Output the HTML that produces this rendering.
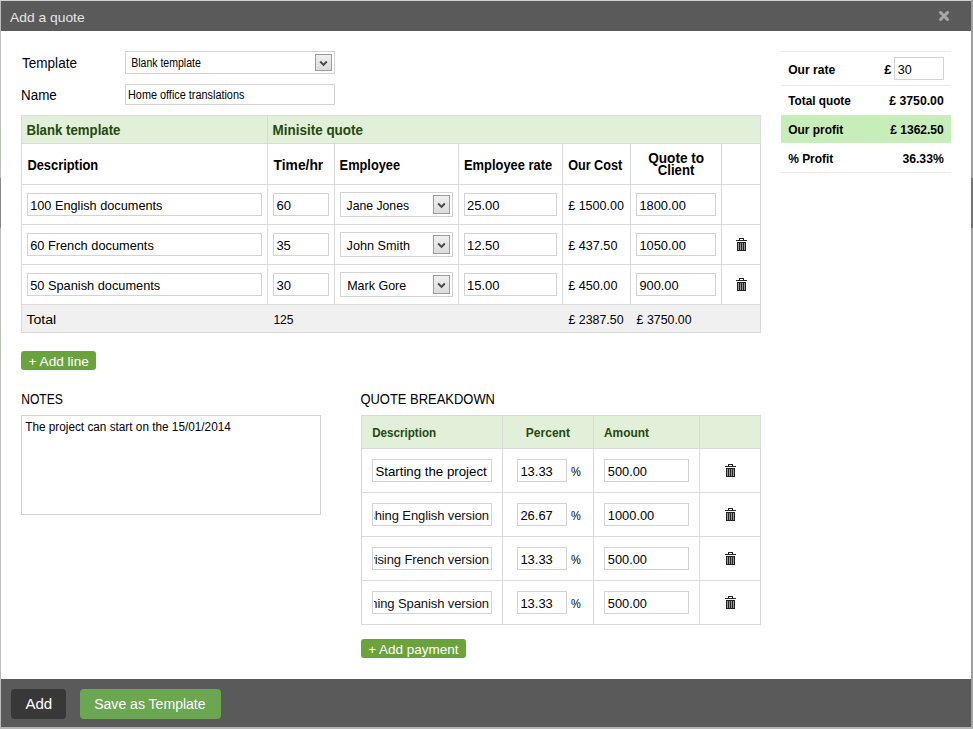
<!DOCTYPE html>
<html><head><meta charset="utf-8">
<style>
*{box-sizing:border-box;margin:0;padding:0}
html,body{width:973px;height:729px;overflow:hidden;background:#bdbdbd;font-family:"Liberation Sans",sans-serif}
.a{position:absolute}
.box{position:absolute;border:1px solid #d3d3d3;background:#fff}
.selbtn{position:absolute;border:1px solid #9c9c9c;background:linear-gradient(#f0f0f0,#dcdcdc)}
svg text{font-family:"Liberation Sans",sans-serif}
</style></head><body>

<div class="a" style="left:0px;top:0px;width:973px;height:1px;background:#d2d2d2;"></div>
<div class="a" style="left:1px;top:1px;width:970px;height:726px;background:#ffffff;"></div>
<div class="a" style="left:971px;top:0px;width:2px;height:729px;background:#a0a0a0;"></div>
<div class="a" style="left:971px;top:178px;width:2px;height:50px;background:#747474;"></div>
<div class="a" style="left:0px;top:1px;width:1px;height:726px;background:#bcbcbc;"></div>
<div class="a" style="left:0px;top:178px;width:1px;height:50px;background:#8a8a8a;"></div>
<div class="a" style="left:0px;top:125px;width:1px;height:41px;background:#b5c2ad;"></div>
<div class="a" style="left:0px;top:328px;width:1px;height:31px;background:#b5c2ad;"></div>
<div class="a" style="left:0px;top:727px;width:973px;height:2px;background:#b4b4b4;"></div>
<div class="a" style="left:1px;top:1px;width:970px;height:30px;background:#5a5a5a;"></div>
<svg class="a" style="left:939px;top:11px" width="10" height="10" viewBox="0 0 10 10"><path d="M1.6 1.6L8.4 8.4M8.4 1.6L1.6 8.4" stroke="#a6a6a6" stroke-width="3" stroke-linecap="square"/></svg>
<div class="a" style="left:1px;top:679px;width:970px;height:48px;background:#5a5a5a;"></div>
<div class="a" style="left:11px;top:689px;width:55px;height:30px;background:#383838;border-radius:4px"></div>
<div class="a" style="left:80px;top:689px;width:141px;height:30px;background:#6ba651;border-radius:4px"></div>
<div class="box" style="left:125px;top:51px;width:210px;height:23px;border-color:#d3d3d3"></div>
<div class="selbtn" style="left:315px;top:54px;width:17px;height:17px"><svg class="a" style="left:3.0px;top:5.0px" width="9" height="7" viewBox="0 0 9 7"><path d="M1.2 1.5L4.5 4.9L7.8 1.5" fill="none" stroke="#4a4a4a" stroke-width="2"/></svg></div>
<div class="box" style="left:125px;top:84px;width:210px;height:21px;border-color:#d3d3d3"></div>
<div class="a" style="left:22px;top:116px;width:738px;height:27px;background:#e2efd9;"></div>
<div class="a" style="left:22px;top:305px;width:738px;height:27px;background:#f0f0f0;"></div>
<div class="a" style="left:21px;top:115px;width:740px;height:1px;background:#dadada"></div>
<div class="a" style="left:21px;top:143px;width:740px;height:1px;background:#dadada"></div>
<div class="a" style="left:21px;top:184px;width:740px;height:1px;background:#dadada"></div>
<div class="a" style="left:21px;top:224px;width:740px;height:1px;background:#dadada"></div>
<div class="a" style="left:21px;top:264px;width:740px;height:1px;background:#dadada"></div>
<div class="a" style="left:21px;top:304px;width:740px;height:1px;background:#dadada"></div>
<div class="a" style="left:21px;top:332px;width:740px;height:1px;background:#dadada"></div>
<div class="a" style="left:21px;top:115px;width:1px;height:218px;background:#dadada"></div>
<div class="a" style="left:760px;top:115px;width:1px;height:218px;background:#dadada"></div>
<div class="a" style="left:267px;top:115px;width:1px;height:190px;background:#dadada"></div>
<div class="a" style="left:334px;top:143px;width:1px;height:162px;background:#dadada"></div>
<div class="a" style="left:458px;top:143px;width:1px;height:162px;background:#dadada"></div>
<div class="a" style="left:562px;top:143px;width:1px;height:162px;background:#dadada"></div>
<div class="a" style="left:630px;top:143px;width:1px;height:162px;background:#dadada"></div>
<div class="a" style="left:721px;top:143px;width:1px;height:162px;background:#dadada"></div>
<div class="box" style="left:27px;top:193px;width:235px;height:23px;border-color:#d3d3d3"></div>
<div class="box" style="left:273px;top:193px;width:56px;height:23px;border-color:#d3d3d3"></div>
<div class="box" style="left:340px;top:192px;width:113px;height:25px;border-color:#d3d3d3"></div>
<div class="selbtn" style="left:433px;top:195px;width:17px;height:19px"><svg class="a" style="left:3.0px;top:6.0px" width="9" height="7" viewBox="0 0 9 7"><path d="M1.2 1.5L4.5 4.9L7.8 1.5" fill="none" stroke="#4a4a4a" stroke-width="2"/></svg></div>
<div class="box" style="left:464px;top:193px;width:93px;height:23px;border-color:#d3d3d3"></div>
<div class="box" style="left:636px;top:193px;width:80px;height:23px;border-color:#d3d3d3"></div>
<div class="box" style="left:27px;top:233px;width:235px;height:23px;border-color:#d3d3d3"></div>
<div class="box" style="left:273px;top:233px;width:56px;height:23px;border-color:#d3d3d3"></div>
<div class="box" style="left:340px;top:232px;width:113px;height:25px;border-color:#d3d3d3"></div>
<div class="selbtn" style="left:433px;top:235px;width:17px;height:19px"><svg class="a" style="left:3.0px;top:6.0px" width="9" height="7" viewBox="0 0 9 7"><path d="M1.2 1.5L4.5 4.9L7.8 1.5" fill="none" stroke="#4a4a4a" stroke-width="2"/></svg></div>
<div class="box" style="left:464px;top:233px;width:93px;height:23px;border-color:#d3d3d3"></div>
<div class="box" style="left:636px;top:233px;width:80px;height:23px;border-color:#d3d3d3"></div>
<svg class="a" style="left:736px;top:238px" width="11" height="13" viewBox="0 0 11 13" shape-rendering="crispEdges">
<rect x="3" y="0" width="5" height="1" fill="#222"/><rect x="3" y="1" width="1" height="1" fill="#222"/><rect x="7" y="1" width="1" height="1" fill="#222"/>
<rect x="0" y="2" width="11" height="1" fill="#222"/>
<rect x="1" y="4" width="9" height="9" fill="#222"/>
<rect x="2" y="5" width="1" height="7" fill="#999"/><rect x="4" y="5" width="1" height="7" fill="#999"/><rect x="6" y="5" width="1" height="7" fill="#999"/><rect x="8" y="5" width="1" height="7" fill="#999"/>
</svg>
<div class="box" style="left:27px;top:273px;width:235px;height:23px;border-color:#d3d3d3"></div>
<div class="box" style="left:273px;top:273px;width:56px;height:23px;border-color:#d3d3d3"></div>
<div class="box" style="left:340px;top:272px;width:113px;height:25px;border-color:#d3d3d3"></div>
<div class="selbtn" style="left:433px;top:275px;width:17px;height:19px"><svg class="a" style="left:3.0px;top:6.0px" width="9" height="7" viewBox="0 0 9 7"><path d="M1.2 1.5L4.5 4.9L7.8 1.5" fill="none" stroke="#4a4a4a" stroke-width="2"/></svg></div>
<div class="box" style="left:464px;top:273px;width:93px;height:23px;border-color:#d3d3d3"></div>
<div class="box" style="left:636px;top:273px;width:80px;height:23px;border-color:#d3d3d3"></div>
<svg class="a" style="left:736px;top:278px" width="11" height="13" viewBox="0 0 11 13" shape-rendering="crispEdges">
<rect x="3" y="0" width="5" height="1" fill="#222"/><rect x="3" y="1" width="1" height="1" fill="#222"/><rect x="7" y="1" width="1" height="1" fill="#222"/>
<rect x="0" y="2" width="11" height="1" fill="#222"/>
<rect x="1" y="4" width="9" height="9" fill="#222"/>
<rect x="2" y="5" width="1" height="7" fill="#999"/><rect x="4" y="5" width="1" height="7" fill="#999"/><rect x="6" y="5" width="1" height="7" fill="#999"/><rect x="8" y="5" width="1" height="7" fill="#999"/>
</svg>
<div class="a" style="left:21px;top:351px;width:75px;height:19px;background:#6aa33b;border-radius:3px"></div>
<div class="box" style="left:21px;top:415px;width:300px;height:100px;border-color:#d3d3d3"></div>
<div class="a" style="left:362px;top:416px;width:398px;height:32px;background:#e2efd9;"></div>
<div class="a" style="left:361px;top:415px;width:400px;height:1px;background:#dadada"></div>
<div class="a" style="left:361px;top:448px;width:400px;height:1px;background:#dadada"></div>
<div class="a" style="left:361px;top:492px;width:400px;height:1px;background:#dadada"></div>
<div class="a" style="left:361px;top:536px;width:400px;height:1px;background:#dadada"></div>
<div class="a" style="left:361px;top:580px;width:400px;height:1px;background:#dadada"></div>
<div class="a" style="left:361px;top:624px;width:400px;height:1px;background:#dadada"></div>
<div class="a" style="left:361px;top:415px;width:1px;height:210px;background:#dadada"></div>
<div class="a" style="left:502px;top:415px;width:1px;height:210px;background:#dadada"></div>
<div class="a" style="left:593px;top:415px;width:1px;height:210px;background:#dadada"></div>
<div class="a" style="left:699px;top:415px;width:1px;height:210px;background:#dadada"></div>
<div class="a" style="left:760px;top:415px;width:1px;height:210px;background:#dadada"></div>
<div class="box" style="left:372px;top:459px;width:120px;height:23px;border-color:#d3d3d3"></div>
<div class="box" style="left:517px;top:459px;width:50px;height:23px;border-color:#d3d3d3"></div>
<div class="box" style="left:604px;top:459px;width:85px;height:23px;border-color:#d3d3d3"></div>
<svg class="a" style="left:725px;top:464px" width="11" height="13" viewBox="0 0 11 13" shape-rendering="crispEdges">
<rect x="3" y="0" width="5" height="1" fill="#222"/><rect x="3" y="1" width="1" height="1" fill="#222"/><rect x="7" y="1" width="1" height="1" fill="#222"/>
<rect x="0" y="2" width="11" height="1" fill="#222"/>
<rect x="1" y="4" width="9" height="9" fill="#222"/>
<rect x="2" y="5" width="1" height="7" fill="#999"/><rect x="4" y="5" width="1" height="7" fill="#999"/><rect x="6" y="5" width="1" height="7" fill="#999"/><rect x="8" y="5" width="1" height="7" fill="#999"/>
</svg>
<div class="box" style="left:372px;top:503px;width:120px;height:23px;border-color:#d3d3d3"></div>
<div class="box" style="left:517px;top:503px;width:50px;height:23px;border-color:#d3d3d3"></div>
<div class="box" style="left:604px;top:503px;width:85px;height:23px;border-color:#d3d3d3"></div>
<svg class="a" style="left:725px;top:508px" width="11" height="13" viewBox="0 0 11 13" shape-rendering="crispEdges">
<rect x="3" y="0" width="5" height="1" fill="#222"/><rect x="3" y="1" width="1" height="1" fill="#222"/><rect x="7" y="1" width="1" height="1" fill="#222"/>
<rect x="0" y="2" width="11" height="1" fill="#222"/>
<rect x="1" y="4" width="9" height="9" fill="#222"/>
<rect x="2" y="5" width="1" height="7" fill="#999"/><rect x="4" y="5" width="1" height="7" fill="#999"/><rect x="6" y="5" width="1" height="7" fill="#999"/><rect x="8" y="5" width="1" height="7" fill="#999"/>
</svg>
<div class="box" style="left:372px;top:547px;width:120px;height:23px;border-color:#d3d3d3"></div>
<div class="box" style="left:517px;top:547px;width:50px;height:23px;border-color:#d3d3d3"></div>
<div class="box" style="left:604px;top:547px;width:85px;height:23px;border-color:#d3d3d3"></div>
<svg class="a" style="left:725px;top:552px" width="11" height="13" viewBox="0 0 11 13" shape-rendering="crispEdges">
<rect x="3" y="0" width="5" height="1" fill="#222"/><rect x="3" y="1" width="1" height="1" fill="#222"/><rect x="7" y="1" width="1" height="1" fill="#222"/>
<rect x="0" y="2" width="11" height="1" fill="#222"/>
<rect x="1" y="4" width="9" height="9" fill="#222"/>
<rect x="2" y="5" width="1" height="7" fill="#999"/><rect x="4" y="5" width="1" height="7" fill="#999"/><rect x="6" y="5" width="1" height="7" fill="#999"/><rect x="8" y="5" width="1" height="7" fill="#999"/>
</svg>
<div class="box" style="left:372px;top:591px;width:120px;height:23px;border-color:#d3d3d3"></div>
<div class="box" style="left:517px;top:591px;width:50px;height:23px;border-color:#d3d3d3"></div>
<div class="box" style="left:604px;top:591px;width:85px;height:23px;border-color:#d3d3d3"></div>
<svg class="a" style="left:725px;top:596px" width="11" height="13" viewBox="0 0 11 13" shape-rendering="crispEdges">
<rect x="3" y="0" width="5" height="1" fill="#222"/><rect x="3" y="1" width="1" height="1" fill="#222"/><rect x="7" y="1" width="1" height="1" fill="#222"/>
<rect x="0" y="2" width="11" height="1" fill="#222"/>
<rect x="1" y="4" width="9" height="9" fill="#222"/>
<rect x="2" y="5" width="1" height="7" fill="#999"/><rect x="4" y="5" width="1" height="7" fill="#999"/><rect x="6" y="5" width="1" height="7" fill="#999"/><rect x="8" y="5" width="1" height="7" fill="#999"/>
</svg>
<div class="a" style="left:361px;top:639px;width:105px;height:19px;background:#6aa33b;border-radius:3px"></div>
<div class="a" style="left:781px;top:51px;width:170px;height:1px;background:#e8e8e8"></div>
<div class="a" style="left:781px;top:85px;width:170px;height:1px;background:#e8e8e8"></div>
<div class="a" style="left:781px;top:115px;width:170px;height:28px;background:#c7eeb9;"></div>
<div class="a" style="left:781px;top:172px;width:170px;height:1px;background:#e8e8e8"></div>
<div class="box" style="left:894px;top:57px;width:50px;height:23px;border-color:#d3d3d3"></div>
<svg class="a" style="left:0;top:0" width="973" height="729">
<defs><clipPath id="cl"><rect x="374" y="440" width="116" height="190"/></clipPath></defs>
<text id="title" x="10.00" y="22.00" font-size="13.5" font-weight="normal" fill="#e4e4e4" textLength="74.64" lengthAdjust="spacingAndGlyphs">Add a quote</text>
<text id="tpl" x="22.00" y="68.00" font-size="14" font-weight="normal" fill="#000000" textLength="54.96" lengthAdjust="spacingAndGlyphs">Template</text>
<text id="name" x="21.00" y="100.00" font-size="14" font-weight="normal" fill="#000000" textLength="35.76" lengthAdjust="spacingAndGlyphs">Name</text>
<text id="seltxt" x="131.20" y="67.30" font-size="12" font-weight="normal" fill="#000000" textLength="69.65" lengthAdjust="spacingAndGlyphs">Blank template</text>
<text id="nametxt" x="128.00" y="99.30" font-size="12" font-weight="normal" fill="#000000" textLength="116.38" lengthAdjust="spacingAndGlyphs">Home office translations</text>
<text id="h_bt" x="26.40" y="135.00" font-size="14" font-weight="bold" fill="#25490e" textLength="94.04" lengthAdjust="spacingAndGlyphs">Blank template</text>
<text id="h_mq" x="272.60" y="135.00" font-size="14" font-weight="bold" fill="#25490e" textLength="90.42" lengthAdjust="spacingAndGlyphs">Minisite quote</text>
<text id="h_desc" x="27.40" y="170.00" font-size="14" font-weight="bold" fill="#000000" textLength="70.81" lengthAdjust="spacingAndGlyphs">Description</text>
<text id="h_time" x="273.60" y="170.00" font-size="14" font-weight="bold" fill="#000000" textLength="49.65" lengthAdjust="spacingAndGlyphs">Time/hr</text>
<text id="h_emp" x="339.60" y="170.00" font-size="14" font-weight="bold" fill="#000000" textLength="60.45" lengthAdjust="spacingAndGlyphs">Employee</text>
<text id="h_rate" x="464.00" y="170.00" font-size="14" font-weight="bold" fill="#000000" textLength="88.15" lengthAdjust="spacingAndGlyphs">Employee rate</text>
<text id="h_cost" x="568.20" y="170.00" font-size="14" font-weight="bold" fill="#000000" textLength="53.97" lengthAdjust="spacingAndGlyphs">Our Cost</text>
<text id="h_q1" x="648.20" y="163.30" font-size="14" font-weight="bold" fill="#000000" textLength="56.00" lengthAdjust="spacingAndGlyphs">Quote to</text>
<text id="h_q2" x="657.80" y="175.30" font-size="14" font-weight="bold" fill="#000000" textLength="36.57" lengthAdjust="spacingAndGlyphs">Client</text>
<text id="r1d" x="30.20" y="210.00" font-size="13" font-weight="normal" fill="#000000" textLength="132.26" lengthAdjust="spacingAndGlyphs">100 English documents</text>
<text id="r2d" x="30.20" y="250.00" font-size="13" font-weight="normal" fill="#000000" textLength="123.61" lengthAdjust="spacingAndGlyphs">60 French documents</text>
<text id="r3d" x="30.20" y="290.00" font-size="13" font-weight="normal" fill="#000000" textLength="130.03" lengthAdjust="spacingAndGlyphs">50 Spanish documents</text>
<text id="r1t" x="276.40" y="210.00" font-size="13" font-weight="normal" fill="#000000" textLength="14.63" lengthAdjust="spacingAndGlyphs">60</text>
<text id="r2t" x="276.40" y="250.00" font-size="13" font-weight="normal" fill="#000000" textLength="14.43" lengthAdjust="spacingAndGlyphs">35</text>
<text id="r3t" x="276.40" y="290.00" font-size="13" font-weight="normal" fill="#000000" textLength="14.63" lengthAdjust="spacingAndGlyphs">30</text>
<text id="r1e" x="346.60" y="210.00" font-size="13" font-weight="normal" fill="#000000" textLength="62.46" lengthAdjust="spacingAndGlyphs">Jane Jones</text>
<text id="r2e" x="346.60" y="250.00" font-size="13" font-weight="normal" fill="#000000" textLength="63.43" lengthAdjust="spacingAndGlyphs">John Smith</text>
<text id="r3e" x="347.20" y="290.00" font-size="13" font-weight="normal" fill="#000000" textLength="59.04" lengthAdjust="spacingAndGlyphs">Mark Gore</text>
<text id="r1r" x="467.00" y="210.00" font-size="13" font-weight="normal" fill="#000000" textLength="32.63" lengthAdjust="spacingAndGlyphs">25.00</text>
<text id="r2r" x="467.00" y="250.00" font-size="13" font-weight="normal" fill="#000000" textLength="32.63" lengthAdjust="spacingAndGlyphs">12.50</text>
<text id="r3r" x="467.00" y="290.00" font-size="13" font-weight="normal" fill="#000000" textLength="32.63" lengthAdjust="spacingAndGlyphs">15.00</text>
<text id="r1c" x="568.20" y="210.00" font-size="13" font-weight="normal" fill="#000000" textLength="55.78" lengthAdjust="spacingAndGlyphs">£ 1500.00</text>
<text id="r2c" x="568.20" y="250.00" font-size="13" font-weight="normal" fill="#000000" textLength="49.23" lengthAdjust="spacingAndGlyphs">£ 437.50</text>
<text id="r3c" x="568.20" y="290.00" font-size="13" font-weight="normal" fill="#000000" textLength="49.23" lengthAdjust="spacingAndGlyphs">£ 450.00</text>
<text id="r1q" x="639.40" y="210.00" font-size="13" font-weight="normal" fill="#000000" textLength="46.46" lengthAdjust="spacingAndGlyphs">1800.00</text>
<text id="r2q" x="639.40" y="250.00" font-size="13" font-weight="normal" fill="#000000" textLength="46.46" lengthAdjust="spacingAndGlyphs">1050.00</text>
<text id="r3q" x="639.40" y="290.00" font-size="13" font-weight="normal" fill="#000000" textLength="39.18" lengthAdjust="spacingAndGlyphs">900.00</text>
<text id="tot" x="26.40" y="324.00" font-size="13" font-weight="normal" fill="#000000" textLength="29.83" lengthAdjust="spacingAndGlyphs">Total</text>
<text id="tot_t" x="273.40" y="324.00" font-size="13" font-weight="normal" fill="#000000" textLength="20.18" lengthAdjust="spacingAndGlyphs">125</text>
<text id="tot_c" x="568.40" y="324.00" font-size="13" font-weight="normal" fill="#000000" textLength="55.18" lengthAdjust="spacingAndGlyphs">£ 2387.50</text>
<text id="tot_q" x="636.60" y="324.00" font-size="13" font-weight="normal" fill="#000000" textLength="54.98" lengthAdjust="spacingAndGlyphs">£ 3750.00</text>
<text id="addline" x="28.60" y="366.00" font-size="13" font-weight="normal" fill="#ffffff" textLength="60.20" lengthAdjust="spacingAndGlyphs">+ Add line</text>
<text id="notes" x="21.20" y="404.00" font-size="14" font-weight="normal" fill="#000000" textLength="41.67" lengthAdjust="spacingAndGlyphs">NOTES</text>
<text id="notetxt" x="25.20" y="431.00" font-size="12" font-weight="normal" fill="#000000" textLength="205.65" lengthAdjust="spacingAndGlyphs">The project can start on the 15/01/2014</text>
<text id="qb" x="360.40" y="404.00" font-size="14" font-weight="normal" fill="#000000" textLength="134.60" lengthAdjust="spacingAndGlyphs">QUOTE BREAKDOWN</text>
<text id="b_desc" x="372.20" y="437.00" font-size="12" font-weight="bold" fill="#25490e" textLength="64.01" lengthAdjust="spacingAndGlyphs">Description</text>
<text id="b_pct" x="525.80" y="437.00" font-size="12" font-weight="bold" fill="#25490e" textLength="44.18" lengthAdjust="spacingAndGlyphs">Percent</text>
<text id="b_amt" x="604.00" y="437.00" font-size="12" font-weight="bold" fill="#25490e" textLength="44.96" lengthAdjust="spacingAndGlyphs">Amount</text>
<text id="b1d" x="375.40" y="476.00" font-size="13" font-weight="normal" fill="#000000" textLength="111.31" lengthAdjust="spacingAndGlyphs">Starting the project</text>
<text id="b1p" x="520.40" y="476.00" font-size="13" font-weight="normal" fill="#000000" textLength="32.43" lengthAdjust="spacingAndGlyphs">13.33</text>
<text id="b2p" x="520.40" y="520.00" font-size="13" font-weight="normal" fill="#000000" textLength="32.43" lengthAdjust="spacingAndGlyphs">26.67</text>
<text id="b3p" x="520.40" y="564.00" font-size="13" font-weight="normal" fill="#000000" textLength="32.43" lengthAdjust="spacingAndGlyphs">13.33</text>
<text id="b4p" x="520.40" y="608.00" font-size="13" font-weight="normal" fill="#000000" textLength="32.43" lengthAdjust="spacingAndGlyphs">13.33</text>
<text id="b1s" x="571.00" y="476.00" font-size="13" font-weight="normal" fill="#000000" textLength="9.79" lengthAdjust="spacingAndGlyphs">%</text>
<text id="b2s" x="571.00" y="520.00" font-size="13" font-weight="normal" fill="#000000" textLength="9.79" lengthAdjust="spacingAndGlyphs">%</text>
<text id="b3s" x="571.00" y="564.00" font-size="13" font-weight="normal" fill="#000000" textLength="9.79" lengthAdjust="spacingAndGlyphs">%</text>
<text id="b4s" x="571.00" y="608.00" font-size="13" font-weight="normal" fill="#000000" textLength="9.79" lengthAdjust="spacingAndGlyphs">%</text>
<text id="b1a" x="607.80" y="476.00" font-size="13" font-weight="normal" fill="#000000" textLength="39.18" lengthAdjust="spacingAndGlyphs">500.00</text>
<text id="b2a" x="607.80" y="520.00" font-size="13" font-weight="normal" fill="#000000" textLength="46.46" lengthAdjust="spacingAndGlyphs">1000.00</text>
<text id="b3a" x="607.80" y="564.00" font-size="13" font-weight="normal" fill="#000000" textLength="39.18" lengthAdjust="spacingAndGlyphs">500.00</text>
<text id="b4a" x="607.80" y="608.00" font-size="13" font-weight="normal" fill="#000000" textLength="39.18" lengthAdjust="spacingAndGlyphs">500.00</text>
<text id="addpay" x="368.20" y="654.00" font-size="13" font-weight="normal" fill="#ffffff" textLength="90.39" lengthAdjust="spacingAndGlyphs">+ Add payment</text>
<text id="s_rate" x="788.20" y="74.00" font-size="13" font-weight="bold" fill="#000000" textLength="47.00" lengthAdjust="spacingAndGlyphs">Our rate</text>
<text id="s_pound" x="884.20" y="74.00" font-size="13" font-weight="bold" fill="#000000" textLength="7.15" lengthAdjust="spacingAndGlyphs">£</text>
<text id="s_30" x="897.80" y="74.00" font-size="13" font-weight="normal" fill="#000000" textLength="14.03" lengthAdjust="spacingAndGlyphs">30</text>
<text id="s_tq" x="788.20" y="105.00" font-size="13" font-weight="bold" fill="#000000" textLength="62.64" lengthAdjust="spacingAndGlyphs">Total quote</text>
<text id="s_tqv" x="889.20" y="105.00" font-size="13" font-weight="bold" fill="#000000" textLength="54.58" lengthAdjust="spacingAndGlyphs">£ 3750.00</text>
<text id="s_op" x="788.20" y="134.00" font-size="13" font-weight="bold" fill="#000000" textLength="55.00" lengthAdjust="spacingAndGlyphs">Our profit</text>
<text id="s_opv" x="890.20" y="134.00" font-size="13" font-weight="bold" fill="#000000" textLength="53.58" lengthAdjust="spacingAndGlyphs">£ 1362.50</text>
<text id="s_pp" x="788.20" y="163.00" font-size="13" font-weight="bold" fill="#000000" textLength="45.17" lengthAdjust="spacingAndGlyphs">% Profit</text>
<text id="s_ppv" x="902.40" y="163.00" font-size="13" font-weight="bold" fill="#000000" textLength="41.42" lengthAdjust="spacingAndGlyphs">36.33%</text>
<text id="f_add" x="25.40" y="709.00" font-size="14" font-weight="normal" fill="#ffffff" textLength="26.79" lengthAdjust="spacingAndGlyphs">Add</text>
<text id="f_save" x="94.20" y="709.00" font-size="14" font-weight="normal" fill="#ffffff" textLength="111.40" lengthAdjust="spacingAndGlyphs">Save as Template</text>
<text clip-path="url(#cl)" x="489" y="520" font-size="13" fill="#111111" text-anchor="end" letter-spacing="-0.1">Publishing English version</text>
<text clip-path="url(#cl)" x="489" y="564" font-size="13" fill="#111111" text-anchor="end" letter-spacing="-0.1">Revising French version</text>
<text clip-path="url(#cl)" x="489" y="608" font-size="13" fill="#111111" text-anchor="end" letter-spacing="-0.1">Publishing Spanish version</text>
</svg>
</body></html>
